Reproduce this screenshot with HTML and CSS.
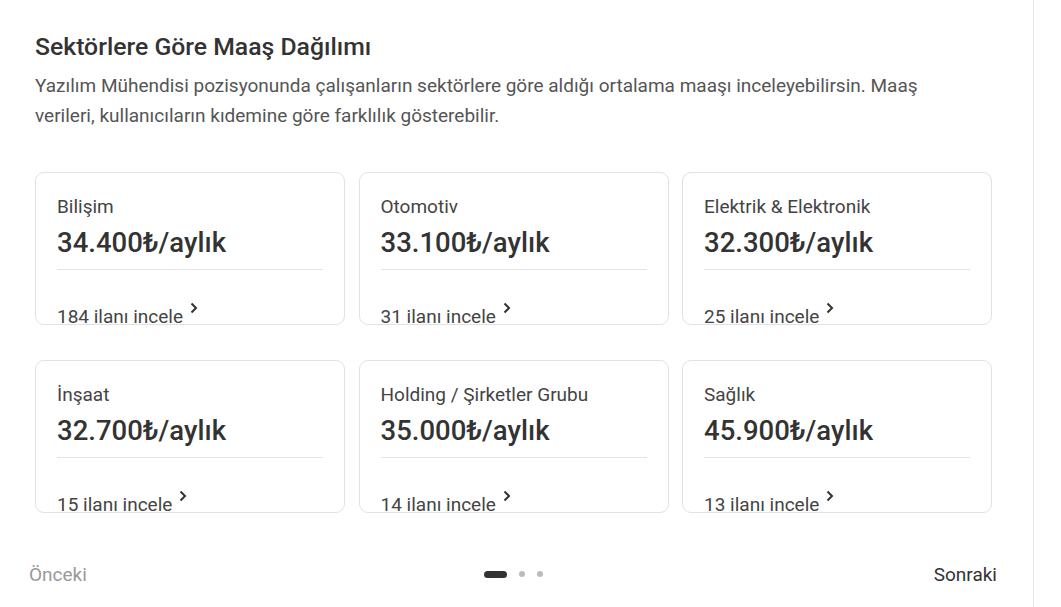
FILE: index.html
```html
<!DOCTYPE html>
<html lang="tr">
<head>
<meta charset="utf-8">
<link rel="stylesheet" href="styles.css">
</head>
<body>
<div class="page">
  <section class="panel">
    <h2 class="title">Sektörlere Göre Maaş Dağılımı</h2>
    <p class="desc">Yazılım Mühendisi pozisyonunda çalışanların sektörlere göre aldığı ortalama maaşı inceleyebilirsin. Maaş verileri, kullanıcıların kıdemine göre farklılık gösterebilir.</p>
    <div class="grid">
      <div class="card">
        <div class="sector">Bilişim</div>
        <div class="price">34.400₺/aylık</div>
        <div class="link">184 ilanı incele <svg class="chev" viewBox="0 0 9 12" width="9" height="12"><path d="M2.5 1.5l4.5 4.5-4.5 4.5" fill="none" stroke="#333" stroke-width="2"/></svg></div>
      </div>
      <div class="card">
        <div class="sector">Otomotiv</div>
        <div class="price">33.100₺/aylık</div>
        <div class="link">31 ilanı incele <svg class="chev" viewBox="0 0 9 12" width="9" height="12"><path d="M2.5 1.5l4.5 4.5-4.5 4.5" fill="none" stroke="#333" stroke-width="2"/></svg></div>
      </div>
      <div class="card">
        <div class="sector">Elektrik &amp; Elektronik</div>
        <div class="price">32.300₺/aylık</div>
        <div class="link">25 ilanı incele <svg class="chev" viewBox="0 0 9 12" width="9" height="12"><path d="M2.5 1.5l4.5 4.5-4.5 4.5" fill="none" stroke="#333" stroke-width="2"/></svg></div>
      </div>
      <div class="card">
        <div class="sector">İnşaat</div>
        <div class="price">32.700₺/aylık</div>
        <div class="link">15 ilanı incele <svg class="chev" viewBox="0 0 9 12" width="9" height="12"><path d="M2.5 1.5l4.5 4.5-4.5 4.5" fill="none" stroke="#333" stroke-width="2"/></svg></div>
      </div>
      <div class="card">
        <div class="sector">Holding / Şirketler Grubu</div>
        <div class="price">35.000₺/aylık</div>
        <div class="link">14 ilanı incele <svg class="chev" viewBox="0 0 9 12" width="9" height="12"><path d="M2.5 1.5l4.5 4.5-4.5 4.5" fill="none" stroke="#333" stroke-width="2"/></svg></div>
      </div>
      <div class="card">
        <div class="sector">Sağlık</div>
        <div class="price">45.900₺/aylık</div>
        <div class="link">13 ilanı incele <svg class="chev" viewBox="0 0 9 12" width="9" height="12"><path d="M2.5 1.5l4.5 4.5-4.5 4.5" fill="none" stroke="#333" stroke-width="2"/></svg></div>
      </div>
    </div>
    <nav class="pager">
      <span class="prev">Önceki</span>
      <div class="dots"><span class="dot active"></span><span class="dot"></span><span class="dot"></span></div>
      <span class="next">Sonraki</span>
    </nav>
  </section>
</div>
</body>
</html>
```
FILE: styles.css
```css
* { box-sizing: border-box; }
html, body { margin: 0; padding: 0; background: #fff; }
body { font-family: Roboto, "Noto Sans", Arial, sans-serif; color: #333; }
.page { width: 1034px; height: 607px; border-right: 1px solid #e6e6e6; }
.panel { padding: 32px 42px 0 35px; }
.title { margin: 0; font-size: 24.75px; font-weight: 500; line-height: 30px; color: #333; }
.desc { margin: 9px 0 0; font-size: 19px; line-height: 29.5px; color: #555; width: 910px; }
.grid { margin-top: 42px; display: grid; grid-template-columns: repeat(3, 310px); column-gap: 13.5px; row-gap: 35px; }
.card { height: 153px; border: 1px solid #e2e2e2; border-radius: 9px; padding: 23px 21px 0 21px; overflow: hidden; }
.sector { font-size: 19px; line-height: 22px; color: #444; }
.price { font-size: 27.5px; font-weight: 500; line-height: 36px; color: #333; margin-top: 7px; padding-bottom: 8px; border-bottom: 1px solid #e4e4e4; }
.link { margin-top: 32px; font-size: 19px; line-height: 24px; color: #444; white-space: nowrap; }
.chev { vertical-align: 9px; margin-left: 1px; }
.pager { display: flex; align-items: center; justify-content: space-between; margin: 46px 0 0 -6px; width: 968px; height: 30px; font-size: 19px; }
.prev { color: #999; }
.next { color: #333; }
.dots { display: flex; align-items: center; gap: 12px; margin-left: 6px; }
.dot { width: 6px; height: 6px; border-radius: 50%; background: #bbb; }
.dot.active { width: 23px; height: 7px; border-radius: 4px; background: #333; }
```
